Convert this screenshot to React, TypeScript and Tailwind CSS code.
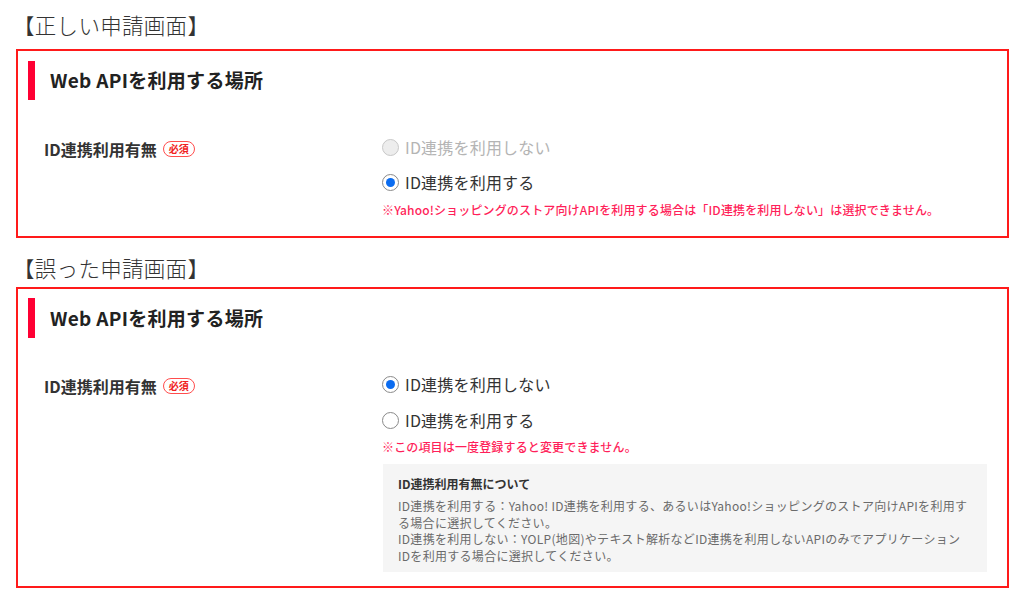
import React from 'react';

const FONT = '"Noto Sans CJK JP", "Noto Sans", sans-serif';

function Radio({ checked, disabled }: { checked?: boolean; disabled?: boolean }) {
  if (disabled) {
    return <span className="w-[17px] h-[17px] rounded-full border border-[#c8c8c8] bg-[#ededed] shrink-0" />;
  }
  return (
    <span className="w-[17px] h-[17px] rounded-full border border-[#8a8a8a] bg-white shrink-0 flex items-center justify-center">
      {checked && <span className="w-[9px] h-[9px] rounded-full bg-[#0b6cf0]" />}
    </span>
  );
}

function Option({ label, checked, disabled }: { label: string; checked?: boolean; disabled?: boolean }) {
  return (
    <div className="flex items-center gap-[6px] h-[24px]">
      <Radio checked={checked} disabled={disabled} />
      <span className={`text-[16px] leading-[24px] tracking-[0.2px] ${disabled ? 'text-[#b4b4b4]' : 'text-[#333]'}`}>{label}</span>
    </div>
  );
}

function Heading({ h }: { h: string }) {
  return (
    <div className={`flex items-center ${h}`}>
      <div className="w-[7px] h-full bg-[#ff0033]" />
      <h2 className="ml-[15px] text-[19px] font-bold text-[#222] tracking-[0.3px]">Web APIを利用する場所</h2>
    </div>
  );
}

function Label() {
  return (
    <div className="w-[364px] shrink-0 flex items-center h-[24px] pt-[3px] pl-[26px]">
      <span className="text-[16px] font-bold text-[#333]">ID連携利用有無</span>
      <span className="ml-[6px] h-[16px] px-[5px] rounded-full border-[1.5px] border-[#ff4d4d] text-[#f02020] text-[10px] font-bold leading-[12px] flex items-center">必須</span>
    </div>
  );
}

export default function App() {
  return (
    <div className="bg-white w-[1024px] h-[593px] overflow-hidden" style={{ fontFamily: FONT }}>
      {/* correct */}
      <p className="pt-[10px] pl-[13px] text-[21.5px] leading-[30px] text-[#333] font-light tracking-[0.3px]">【正しい申請画面】</p>
      <section className="mt-[9px] ml-[16px] w-[993px] border-2 border-[#ff1a1a] pt-[10px] pl-[10px] pb-[17px]">
        <Heading h="h-[39px]" />
        <div className="flex mt-[35px] -ml-[10px]">
          <Label />
          <div className="flex flex-col">
            <Option label="ID連携を利用しない" disabled />
            <div className="mt-[11px]">
              <Option label="ID連携を利用する" checked />
            </div>
            <p className="mt-[7px] text-[12px] leading-[18px] font-medium text-[#ff1f5a] tracking-[0.15px]">
              ※Yahoo!ショッピングのストア向けAPIを利用する場合は「ID連携を利用しない」は選択できません。
            </p>
          </div>
        </div>
      </section>

      {/* wrong */}
      <p className="mt-[15px] pl-[13px] text-[21.5px] leading-[30px] text-[#333] font-light tracking-[0.3px]">【誤った申請画面】</p>
      <section className="mt-[4px] ml-[16px] w-[993px] border-2 border-[#ff1a1a] pt-[9px] pl-[10px] pb-[14px]">
        <Heading h="h-[40px]" />
        <div className="flex mt-[34px] -ml-[10px]">
          <Label />
          <div className="flex flex-col">
            <Option label="ID連携を利用しない" checked />
            <div className="mt-[12px]">
              <Option label="ID連携を利用する" />
            </div>
            <p className="mt-[6px] text-[12px] leading-[18px] font-medium text-[#ff1f5a] tracking-[0.15px]">
              ※この項目は一度登録すると変更できません。
            </p>
            <div className="mt-[8px] ml-[1px] w-[604px] bg-[#f5f5f5] pt-[11px] pb-[8px] px-[15px]">
              <p className="text-[12px] leading-[18px] font-bold text-[#333]">ID連携利用有無について</p>
              <div className="mt-[5px] text-[12px] leading-[16.5px] text-[#6b6b6b] whitespace-nowrap tracking-[0.3px]">
                <p>ID連携を利用する：Yahoo! ID連携を利用する、あるいはYahoo!ショッピングのストア向けAPIを利用す</p>
                <p>る場合に選択してください。</p>
                <p>ID連携を利用しない：YOLP(地図)やテキスト解析などID連携を利用しないAPIのみでアプリケーション</p>
                <p>IDを利用する場合に選択してください。</p>
              </div>
            </div>
          </div>
        </div>
      </section>
    </div>
  );
}
